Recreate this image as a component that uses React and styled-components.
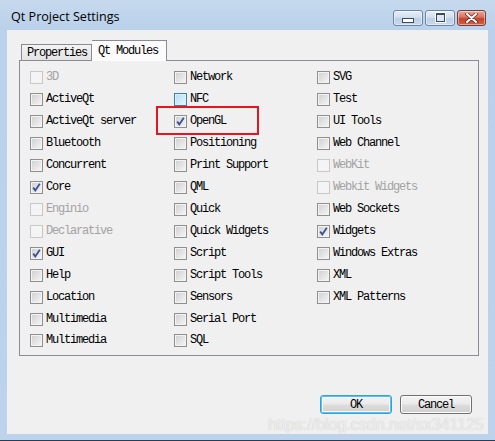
import React from "react";
import styled, { createGlobalStyle } from "styled-components";

const GlobalStyle = createGlobalStyle`
  html, body {
    margin: 0;
    padding: 0;
    background: #ffffff;
  }
`;

const MONO = `"Liberation Mono", "DejaVu Sans Mono", monospace`;

/* Window frame */
const Window = styled.div`
  position: relative;
  width: 495px;
  height: 441px;
  box-sizing: border-box;
  display: flex;
  flex-direction: column;
  background: linear-gradient(180deg, #c6d9ee 0px, #b9d1ea 30px, #bcd3eb 100%);
  border-bottom: 1px solid #2b3d52;
  overflow: hidden;
`;

const TitleBar = styled.div`
  height: 30px;
  flex: none;
  display: flex;
  align-items: center;
  justify-content: space-between;
  padding: 0 9px 0 11px;
  box-sizing: border-box;
`;

const Title = styled.span`
  font-family: "Open Sans", "Noto Sans", sans-serif;
  font-size: 12.6px;
  color: #000;
  margin-top: 3px;
`;

const Controls = styled.div`
  display: flex;
  gap: 2px;
  margin-top: 5px;
`;

const CtrlButton = styled.div`
  width: ${(p) => (p.$close ? "29px" : "30px")};
  height: 16px;
  box-sizing: border-box;
  border-radius: 3px;
  display: flex;
  align-items: center;
  justify-content: center;
  border: 1px solid ${(p) => (p.$close ? "#7b3a33" : "#6e84a3")};
  background: ${(p) =>
    p.$close
      ? "linear-gradient(180deg, #e9a99b 0%, #d7705e 45%, #c4422c 55%, #d25f45 100%)"
      : "linear-gradient(180deg, #e6eef8 0%, #d2dfee 45%, #bccfe6 55%, #c8d9ee 100%)"};
  box-shadow: inset 0 0 0 1px rgba(255, 255, 255, 0.45);
`;

const MinGlyph = styled.div`
  width: 10px;
  height: 3px;
  background: #fff;
  border: 1px solid #3b4a60;
  margin-top: 5px;
`;

const MaxGlyph = styled.div`
  width: 7px;
  height: 6px;
  border: 1px solid #3b4a60;
  border-top-width: 2px;
  background: #dde7f3;
  box-shadow: 0 0 0 1px #fff;
`;

/* Client area */
const Client = styled.div`
  flex: 1;
  margin: 0 7px 6px 7px;
  background: #f0f0f0;
  display: flex;
  flex-direction: column;
  padding: 10px 9px 20px 12px;
  box-sizing: border-box;
`;

const TabBar = styled.div`
  display: flex;
  align-items: flex-end;
  height: 21px;
  padding-left: 2px;
  position: relative;
  z-index: 1;
`;

const Tab = styled.div`
  font-family: ${MONO};
  font-size: 12px;
  letter-spacing: -1.2px;
  color: #000;
  box-sizing: border-box;
  height: ${(p) => (p.$active ? "21px" : "17px")};
  width: ${(p) => (p.$active ? "75px" : "71px")};
  border: 1px solid #898c95;
  border-bottom: ${(p) => (p.$active ? "none" : "1px solid #898c95")};
  background: ${(p) =>
    p.$active ? "#fbfbfb" : "linear-gradient(180deg, #f3f3f3, #e3e3e3)"};
  display: flex;
  align-items: center;
  padding-left: ${(p) => (p.$active ? "6px" : "5px")};
  padding-top: ${(p) => (p.$active ? "0" : "1px")};
  & + & {
    border-left: none;
  }
`;

const Pane = styled.div`
  position: relative;
  width: 460px;
  height: 296px;
  box-sizing: border-box;
  margin-top: -1px;
  border: 1px solid #898c95;
  background: #f0f0f0;
  padding: 5px 0 0 10px;
`;

const ModuleGrid = styled.div`
  display: grid;
  grid-auto-flow: column;
  grid-template-rows: repeat(12, 22px) 20px;
  grid-template-columns: 144px 143px 160px;
`;

const Item = styled.label`
  display: flex;
  align-items: center;
  gap: 3px;
  font-family: ${MONO};
  font-size: 12px;
  letter-spacing: -1.2px;
  color: ${(p) => (p.$disabled ? "#a3a3a3" : "#000")};
  white-space: nowrap;
`;

const Box = styled.span`
  width: 13px;
  height: 13px;
  box-sizing: border-box;
  flex: none;
  display: flex;
  align-items: center;
  justify-content: center;
  border: 1px solid
    ${(p) => (p.$disabled ? "#c8c8c8" : p.$hover ? "#3c7fb1" : "#8f8f8f")};
  background: ${(p) =>
    p.$disabled
      ? "#f4f4f4"
      : p.$hover
      ? "linear-gradient(135deg, #b1dcf5, #e8f6fd)"
      : "linear-gradient(135deg, #cfcfcf, #f6f6f6)"};
  box-shadow: ${(p) =>
    p.$disabled ? "none" : p.$hover ? "inset 0 0 0 1px #def0fb" : "inset 0 0 0 1px #f3f3f3"};
`;

const Highlight = styled.div`
  position: absolute;
  left: 136px;
  top: 45px;
  width: 103px;
  height: 29px;
  box-sizing: border-box;
  border: 2px solid #e5161e;
  pointer-events: none;
`;

const ButtonRow = styled.div`
  margin-top: auto;
  display: flex;
  justify-content: flex-end;
  gap: 8px;
  padding-right: 7px;
`;

const Button = styled.button`
  width: 72px;
  height: 19px;
  box-sizing: border-box;
  padding: 0;
  border-radius: 3px;
  font-family: ${MONO};
  font-size: 12px;
  letter-spacing: -1.2px;
  color: #000;
  border: 1px solid ${(p) => (p.$default ? "#3c9fd8" : "#707070")};
  background: linear-gradient(180deg, #f2f2f2 0%, #ebebeb 48%, #dddddd 52%, #cfcfcf 100%);
  box-shadow: ${(p) =>
    p.$default ? "inset 0 0 0 1px #4ac6f4, inset 0 0 0 2px #fff" : "inset 0 0 0 1px #fcfcfc"};
`;

const Watermark = styled.div`
  position: absolute;
  right: 11px;
  bottom: 6px;
  font-family: "Liberation Sans", Arial, sans-serif;
  font-size: 16px;
  color: rgba(255, 255, 255, 0.72);
  text-shadow: 0 0 1px rgba(140, 140, 140, 0.55);
  pointer-events: none;
`;

const Check = () => (
  <svg width="11" height="11" viewBox="0 0 11 11">
    <path d="M2.2 5.6 L4.3 8.4 L8.8 1.8" fill="none" stroke="#3b4f93" strokeWidth="1.8" />
  </svg>
);

const modules = [
  { name: "3D", disabled: true },
  { name: "ActiveQt" },
  { name: "ActiveQt server" },
  { name: "Bluetooth" },
  { name: "Concurrent" },
  { name: "Core", checked: true },
  { name: "Enginio", disabled: true },
  { name: "Declarative", disabled: true },
  { name: "GUI", checked: true },
  { name: "Help" },
  { name: "Location" },
  { name: "Multimedia" },
  { name: "Multimedia" },
  { name: "Network" },
  { name: "NFC", hover: true },
  { name: "OpenGL", checked: true },
  { name: "Positioning" },
  { name: "Print Support" },
  { name: "QML" },
  { name: "Quick" },
  { name: "Quick Widgets" },
  { name: "Script" },
  { name: "Script Tools" },
  { name: "Sensors" },
  { name: "Serial Port" },
  { name: "SQL" },
  { name: "SVG" },
  { name: "Test" },
  { name: "UI Tools" },
  { name: "Web Channel" },
  { name: "WebKit", disabled: true },
  { name: "Webkit Widgets", disabled: true },
  { name: "Web Sockets" },
  { name: "Widgets", checked: true },
  { name: "Windows Extras" },
  { name: "XML" },
  { name: "XML Patterns" },
];

export default function App() {
  return (
    <>
      <GlobalStyle />
      <Window>
        <TitleBar>
          <Title>Qt Project Settings</Title>
          <Controls>
            <CtrlButton>
              <MinGlyph />
            </CtrlButton>
            <CtrlButton>
              <MaxGlyph />
            </CtrlButton>
            <CtrlButton $close>
              <svg width="13" height="10" viewBox="0 0 13 10">
                <path
                  d="M2 1 L11 9 M11 1 L2 9"
                  stroke="#5a2a22"
                  strokeWidth="3.4"
                  strokeLinecap="round"
                />
                <path
                  d="M2 1 L11 9 M11 1 L2 9"
                  stroke="#ffffff"
                  strokeWidth="2"
                  strokeLinecap="round"
                />
              </svg>
            </CtrlButton>
          </Controls>
        </TitleBar>

        <Client>
          <TabBar>
            <Tab>Properties</Tab>
            <Tab $active>Qt Modules</Tab>
          </TabBar>
          <Pane>
            <ModuleGrid>
              {modules.map((m, i) => (
                <Item key={i} $disabled={m.disabled}>
                  <Box $disabled={m.disabled} $hover={m.hover}>
                    {m.checked && <Check />}
                  </Box>
                  {m.name}
                </Item>
              ))}
            </ModuleGrid>
            <Highlight />
          </Pane>

          <ButtonRow>
            <Button $default>OK</Button>
            <Button>Cancel</Button>
          </ButtonRow>
        </Client>

        <Watermark>https://blog.csdn.net/sx341125</Watermark>
      </Window>
    </>
  );
}
